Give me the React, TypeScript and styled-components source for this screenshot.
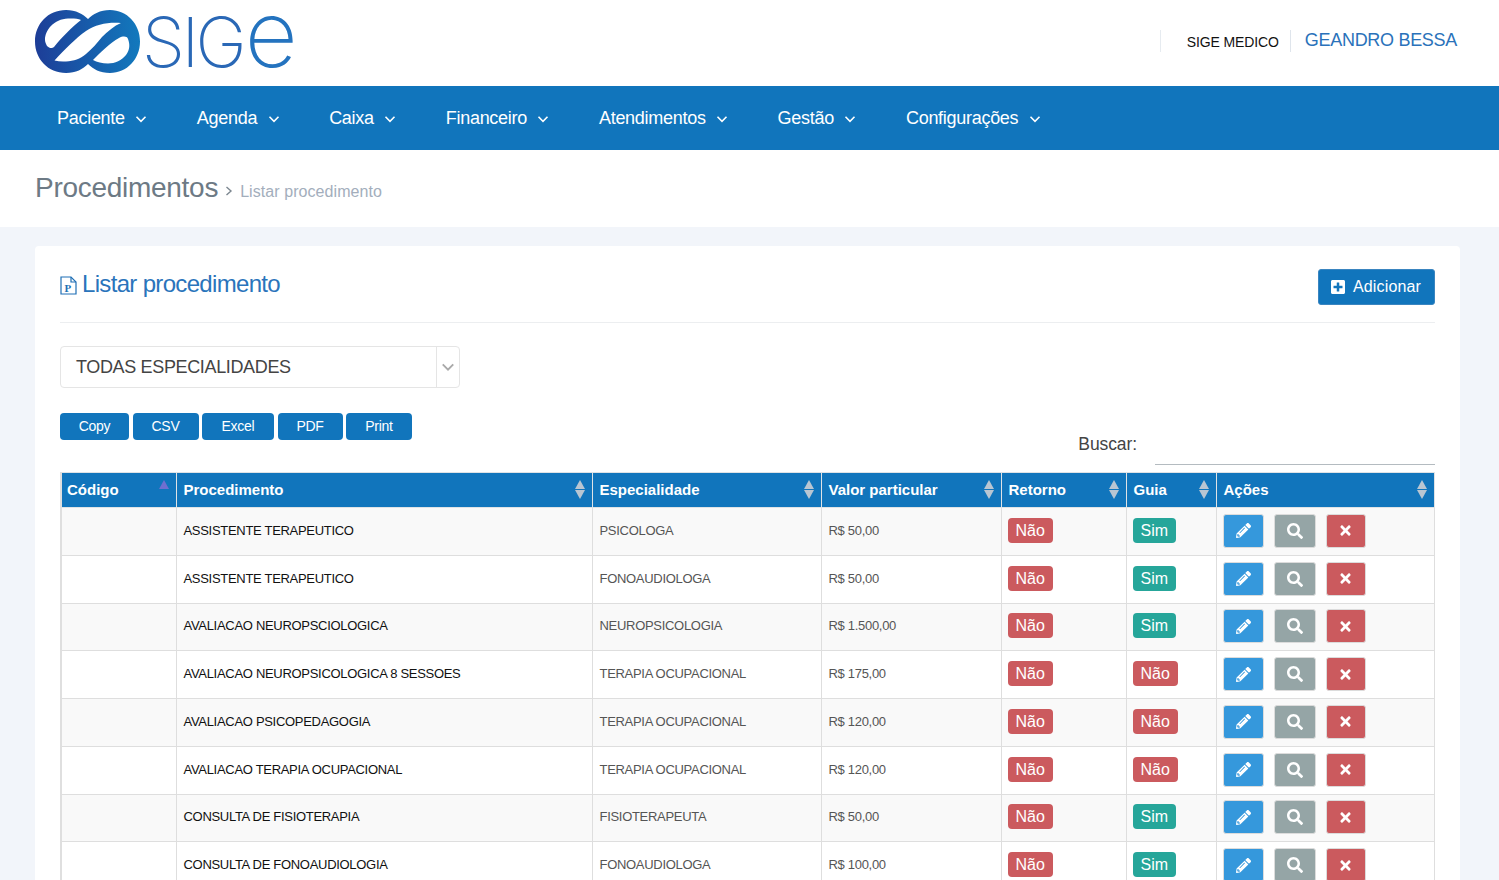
import React from "react";
import styled, { createGlobalStyle } from "styled-components";
import { FaPencilAlt, FaSearch, FaTimes, FaPlusSquare } from "react-icons/fa";

const Global = createGlobalStyle`
  html, body { margin: 0; padding: 0; }
  body { background: #f2f5fa; font-family: "Liberation Sans", Arial, sans-serif; height: 880px; overflow: hidden; }
`;

const BLUE = "#1175bc";

const Page = styled.div`display: flex; flex-direction: column; width: 1499px;`;

const TopBar = styled.header`
  height: 86px; background: #fff; display: flex; align-items: flex-start; justify-content: space-between;
  padding: 0 42px 0 35px; box-sizing: border-box;
`;
const Logo = styled.div`display: flex; align-items: flex-start; margin-top: 10px; height: 64px;`;
const LogoWord = styled.div`
  display: flex; align-items: baseline; height: 64px; margin-left: 1px; overflow: visible;
  font-family: "Inter", "Roboto", sans-serif; font-weight: 150; line-height: 48px;
`;
const LogoCaps = styled.span`font-size: 69px; letter-spacing: -3.5px; color: #2a68b6;`;
const LogoTail = styled.span`font-size: 92px; margin-left: 1.5px; color: #2473bf;`;
const UserArea = styled.div`display: flex; align-items: flex-start; margin-top: 30px;`;
const Company = styled.div`
  height: 22px; border-left: 1px solid #e6ebf0; border-right: 1px solid #dfe5ec; padding: 4px 11px 0 26px; box-sizing: border-box;
  font-size: 14px; line-height: 16px; color: #111; letter-spacing: -0.12px;
`;
const UserName = styled.div`
  margin-left: 14px; font-size: 18px; line-height: 20px; color: #2a72ba; letter-spacing: -0.3px;
`;

const Nav = styled.nav`height: 64px; background: ${BLUE}; display: flex; align-items: center; padding-left: 57px;`;
const NavItem = styled.div`
  display: flex; align-items: center; color: #fff; font-size: 18px; letter-spacing: -0.285px; margin-right: 49px;
  svg { margin-left: 10.5px; margin-top: 1px; margin-right: 0.5px; }
`;

const TitleBar = styled.div`
  height: 77px; background: #fff; display: flex; align-items: baseline; padding: 21px 0 0 35px; box-sizing: border-box;
`;
const PageTitle = styled.h1`margin: 0; font-weight: 400; font-size: 28px; line-height: 34px; color: #6d7a85; letter-spacing: -0.28px;`;
const Crumb = styled.span`margin-left: 7px; font-size: 16px; color: #a3aebc; letter-spacing: 0.07px;`;
const CrumbArrow = styled.span`display: inline-flex; margin-left: 7px; align-self: flex-start; margin-top: 15px;`;

const Content = styled.main`padding: 19px 39px 0 35px;`;
const Card = styled.section`background: #fff; border-radius: 4px; padding: 0 25px; height: 700px;`;
const CardHead = styled.div`
  height: 76px; border-bottom: 1px solid #eceef0; display: flex; justify-content: space-between; align-items: flex-start;
`;
const CardTitle = styled.div`
  display: flex; align-items: center; margin-top: 24px; color: #2a74bb; font-size: 24px; line-height: 28px; letter-spacing: -0.67px;
  svg { margin-right: 5px; margin-top: 3px; }
`;
const AddButton = styled.button`
  margin-top: 23px; height: 36px; width: 117px; background: ${BLUE}; color: #fff; border: 1px solid #3a85c0; border-radius: 3px;
  font: 16px "Liberation Sans", Arial, sans-serif; letter-spacing: 0.15px; display: flex; align-items: center; justify-content: center; gap: 7px; padding: 0 2px 0 0;
  svg { width: 16px; height: 16px; }
`;
const SelectBox = styled.div`
  margin-top: 23px; width: 400px; height: 42px; box-sizing: border-box; border: 1px solid #e5e5e5; border-radius: 4px;
  display: flex; align-items: center; justify-content: space-between; color: #444; font-size: 18px; letter-spacing: -0.35px;
`;
const SelectText = styled.span`padding-left: 15px;`;
const SelectCaret = styled.span`
  width: 22px; height: 100%; border-left: 1px solid #e5e5e5; display: flex; align-items: center; justify-content: center;
`;
const Tools = styled.div`display: flex; justify-content: space-between; align-items: flex-start; height: 59px; margin-top: 25px;`;
const ExportGroup = styled.div`display: flex; gap: 3.5px;`;
const ExportButton = styled.button<{ $w: number }>`
  width: ${(p) => p.$w}px; height: 27px; background: ${BLUE}; color: #fff; border: none; border-radius: 4px; padding: 0 0 2px;
  font: 14px "Liberation Sans", Arial, sans-serif; letter-spacing: -0.25px;
`;
const SearchWrap = styled.label`display: flex; align-items: flex-start; color: #444; font-size: 17.5px; letter-spacing: -0.1px;`;
const SearchLabel = styled.span`margin-top: 21px; margin-right: 18px;`;
const SearchInput = styled.input`
  width: 280px; height: 52px; box-sizing: border-box; border: none; border-bottom: 1px solid #b4bbc0; outline: none; background: transparent;
`;

const Table = styled.table`
  table-layout: fixed; border-collapse: collapse; width: 1373px; font-size: 13px; color: #111;
  border-left: 2px solid #dfdfdf;
`;
const Th = styled.th`
  position: relative; background: ${BLUE}; color: #fff; text-align: left; height: 35px; padding: 0 6px 2px 7px; box-sizing: border-box;
  font-size: 15px; font-weight: 700; letter-spacing: 0; border: 1px solid #dfe3e6;
  &:first-child { padding-left: 5px; }
`;
const Tr = styled.tr<{ $odd: boolean }>`background: ${(p) => (p.$odd ? "#f9f9f9" : "#fff")}; height: 47.75px;`;
const Td = styled.td`
  padding: 0 6px 2px; border: 1px solid #dedede; box-sizing: border-box; white-space: nowrap;
`;
const TextTd = styled(Td)<{ $muted?: boolean }>`
  padding-left: 7px; letter-spacing: -0.3px; color: ${(p) => (p.$muted ? "#555" : "#111")};
`;
const Badge = styled.span<{ $ok: boolean }>`
  display: inline-block; background: ${(p) => (p.$ok ? "#26a69a" : "#cb5a5e")}; color: #fff; font-size: 16px; line-height: 25px; height: 25px;
  padding: 0 8px; border-radius: 4px; letter-spacing: 0; vertical-align: middle;
`;
const Actions = styled.div`display: flex; gap: 10px; margin-top: 1px;`;
const ActionButton = styled.button<{ $bg: string; $w: number; $icon: number }>`
  width: ${(p) => p.$w}px; height: 34px; background: ${(p) => p.$bg}; color: #fff; border: 1px solid #dcdcdc; border-radius: 3px; padding: 0;
  display: flex; align-items: center; justify-content: center;
  svg { width: ${(p) => p.$icon}px; height: ${(p) => p.$icon}px; }
`;
const SortMark = styled.span`position: absolute; right: 7px; top: 7px; display: flex; flex-direction: column; gap: 1px;`;
const Tri = styled.i<{ $up?: boolean; $color: string }>`
  display: block; width: 0; height: 0; border-left: 5.5px solid transparent; border-right: 5.5px solid transparent;
  ${(p) => (p.$up ? `border-bottom: 9px solid ${p.$color};` : `border-top: 9px solid ${p.$color};`)}
`;
const ColW = styled.col<{ $w: number }>`width: ${(p) => p.$w}px;`;

const Chevron = ({ color = "#fff", size = 12 }: { color?: string; size?: number }) => (
  <svg width={size} height={size} viewBox="0 0 12 12" fill="none" stroke={color} strokeWidth="1.6">
    <path d="M1.5 3.8 L6 8.3 L10.5 3.8" />
  </svg>
);

const LogoMark = () => (
  <svg width="106" height="64" viewBox="35 10 106 64">
    <defs>
      <linearGradient id="lg" x1="0" x2="1" y1="0" y2="0">
        <stop offset="0" stopColor="#1d3d97" />
        <stop offset="1" stopColor="#1279bd" />
      </linearGradient>
    </defs>
    <path
      fill="url(#lg)"
      d="M66 10 C76 10 83 14 88 19 C93 14 100 10 110 10 C127 10 140 24 140 41.5 C140 59 127 73 110 73 C100 73 93 69 88 64 C83 69 76 73 66 73 C48 73 35 59 35 41.5 C35 24 48 10 66 10 Z"
    />
    <path fill="#fff" d="M45 40 C45 30 54 19 68 18.5 C73 18.3 78 18.5 81 20 C72 27 62 37 54 47 C52 49 49 48 47 46 C46 44 45 42 45 40 Z" />
    <path fill="#fff" d="M54.5 60.5 C64 50 76 38 86 31 C96 24 109 22 121 23 C114 26 108 31 102 37 C97 43 92 49 86 54 C80 59 74 61 66 61.5 C62 61.8 58 61.5 54.5 60.5 Z" />
    <path fill="#fff" d="M93 60 C100 53 110 43 119 38 C123 36 127 36 128 39 C130 44 130 50 126 55 C122 60 115 63.5 108 63.5 C102 63.5 97 62 93 60 Z" />
  </svg>
);

const DocIcon = () => (
  <svg width="17" height="19" viewBox="0 0 17 19" fill="none" stroke="#1f6fb5" strokeWidth="1.2">
    <path d="M1 1 H11 L16 6 V18 H1 Z" />
    <path d="M11 1 V6 H16" />
    <text x="4.5" y="15.5" fontFamily="Liberation Serif, serif" fontSize="11" fontWeight="700" fill="#1f6fb5" stroke="none">P</text>
  </svg>
);

const menu = ["Paciente", "Agenda", "Caixa", "Financeiro", "Atendimentos", "Gestão", "Configurações"];
const exportsList: [string, number][] = [["Copy", 69], ["CSV", 66], ["Excel", 72], ["PDF", 65], ["Print", 66]];
const heads: [string, number][] = [
  ["Código", 115], ["Procedimento", 416], ["Especialidade", 229], ["Valor particular", 180], ["Retorno", 125], ["Guia", 90], ["Ações", 218],
];
const rows: [string, string, string, boolean][] = [
  ["ASSISTENTE TERAPEUTICO", "PSICOLOGA", "R$ 50,00", true],
  ["ASSISTENTE TERAPEUTICO", "FONOAUDIOLOGA", "R$ 50,00", true],
  ["AVALIACAO NEUROPSCIOLOGICA", "NEUROPSICOLOGIA", "R$ 1.500,00", true],
  ["AVALIACAO NEUROPSICOLOGICA 8 SESSOES", "TERAPIA OCUPACIONAL", "R$ 175,00", false],
  ["AVALIACAO PSICOPEDAGOGIA", "TERAPIA OCUPACIONAL", "R$ 120,00", false],
  ["AVALIACAO TERAPIA OCUPACIONAL", "TERAPIA OCUPACIONAL", "R$ 120,00", false],
  ["CONSULTA DE FISIOTERAPIA", "FISIOTERAPEUTA", "R$ 50,00", true],
  ["CONSULTA DE FONOAUDIOLOGIA", "FONOAUDIOLOGA", "R$ 100,00", true],
];

export default function App() {
  return (
    <Page>
      <Global />
      <TopBar>
        <Logo>
          <LogoMark />
          <LogoWord>
            <LogoCaps>SIG</LogoCaps>
            <LogoTail>e</LogoTail>
          </LogoWord>
        </Logo>
        <UserArea>
          <Company>SIGE MEDICO</Company>
          <UserName>GEANDRO BESSA</UserName>
        </UserArea>
      </TopBar>
      <Nav>
        {menu.map((m) => (
          <NavItem key={m}>
            {m}
            <Chevron />
          </NavItem>
        ))}
      </Nav>
      <TitleBar>
        <PageTitle>Procedimentos</PageTitle>
        <CrumbArrow><svg width="8" height="10" viewBox="0 0 8 10" fill="none" stroke="#7c8790" strokeWidth="1.4"><path d="M1.5 1 L6 5 L1.5 9" /></svg></CrumbArrow>
        <Crumb>Listar procedimento</Crumb>
      </TitleBar>
      <Content>
        <Card>
          <CardHead>
            <CardTitle><DocIcon />Listar procedimento</CardTitle>
            <AddButton><FaPlusSquare />Adicionar</AddButton>
          </CardHead>
          <SelectBox>
            <SelectText>TODAS ESPECIALIDADES</SelectText>
            <SelectCaret><Chevron color="#a9a9a9" size={14} /></SelectCaret>
          </SelectBox>
          <Tools>
            <ExportGroup>
              {exportsList.map(([t, w]) => <ExportButton key={t} $w={w}>{t}</ExportButton>)}
            </ExportGroup>
            <SearchWrap>
              <SearchLabel>Buscar:</SearchLabel>
              <SearchInput />
            </SearchWrap>
          </Tools>
          <Table>
            <colgroup>
              {heads.map(([h, w]) => <ColW key={h} $w={w} />)}
            </colgroup>
            <thead>
              <tr>
                {heads.map(([h], i) => (
                  <Th key={h}>
                    {h}
                    <SortMark>
                      <Tri $up $color={i === 0 ? "#6f6fd0" : "#b9c6d2"} />
                      {i > 0 && <Tri $color="#b9c6d2" />}
                    </SortMark>
                  </Th>
                ))}
              </tr>
            </thead>
            <tbody>
              {rows.map((r, i) => (
                <Tr key={i} $odd={i % 2 === 0}>
                  <Td />
                  <TextTd>{r[0]}</TextTd>
                  <TextTd $muted>{r[1]}</TextTd>
                  <TextTd $muted>{r[2]}</TextTd>
                  <Td><Badge $ok={false}>Não</Badge></Td>
                  <Td><Badge $ok={r[3]}>{r[3] ? "Sim" : "Não"}</Badge></Td>
                  <Td>
                    <Actions>
                      <ActionButton $bg="#3598dc" $w={41} $icon={15}><FaPencilAlt /></ActionButton>
                      <ActionButton $bg="#95a5a6" $w={42} $icon={16}><FaSearch /></ActionButton>
                      <ActionButton $bg="#cb5a5e" $w={40} $icon={15}><FaTimes /></ActionButton>
                    </Actions>
                  </Td>
                </Tr>
              ))}
            </tbody>
          </Table>
        </Card>
      </Content>
    </Page>
  );
}
